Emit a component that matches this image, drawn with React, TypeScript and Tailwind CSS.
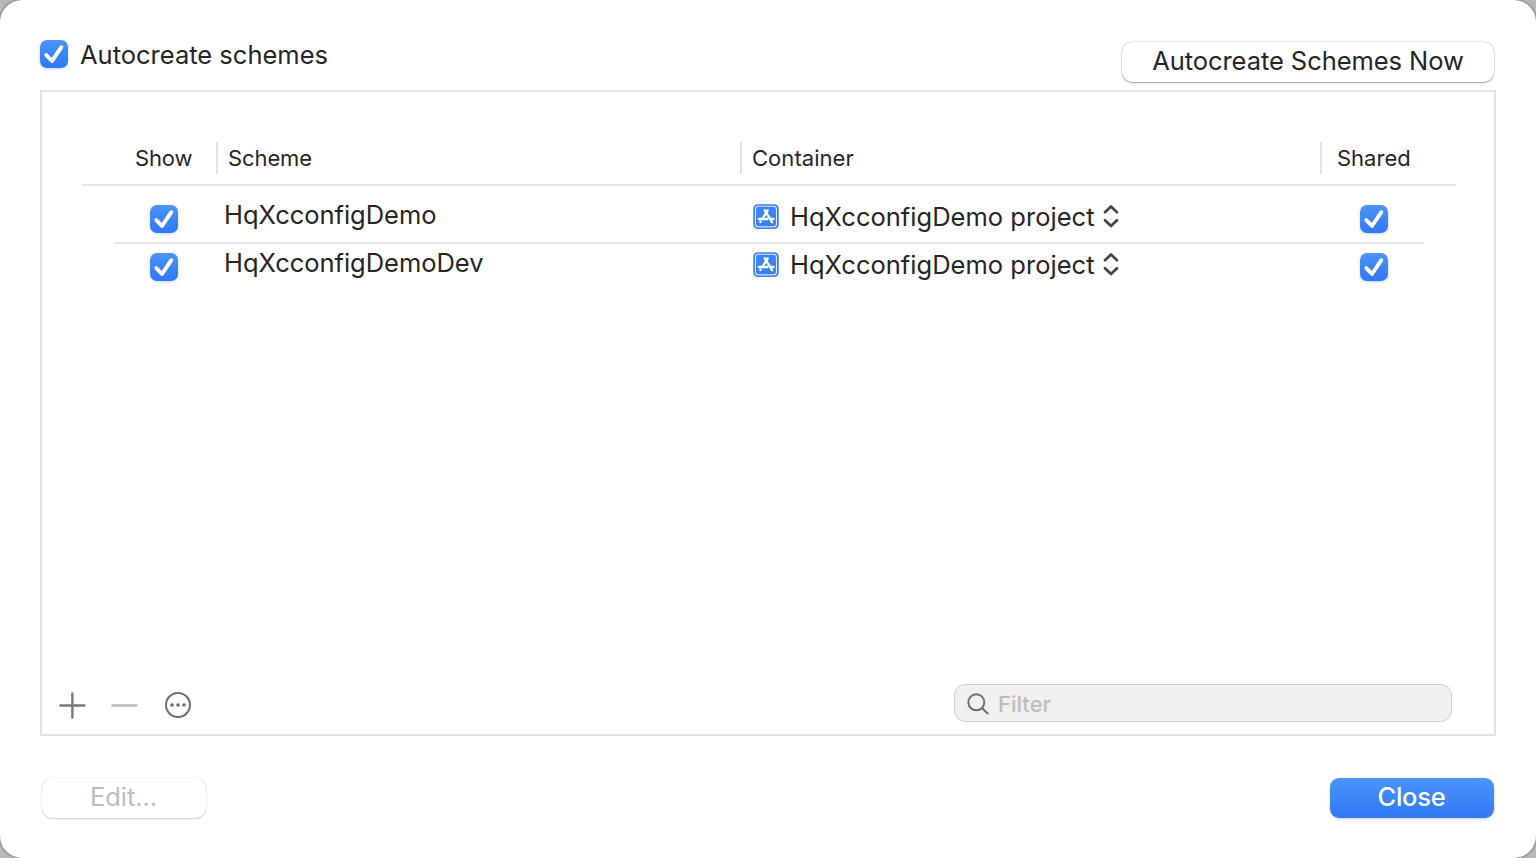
import React from "react";

const rows = [
  { name: "HqXcconfigDemo", container: "HqXcconfigDemo project" },
  { name: "HqXcconfigDemoDev", container: "HqXcconfigDemo project" },
];

function Checkbox() {
  return (
    <span
      role="checkbox"
      aria-checked="true"
      className="block size-7 shrink-0 rounded-[7px] bg-linear-to-b from-[#4a94f9] to-[#2f78f6] shadow-[0_1px_3px_rgba(47,120,246,0.3)]"
    >
      <svg viewBox="0 0 28 28" className="size-7" fill="none" stroke="#fff" strokeWidth="3.9" strokeLinecap="round" strokeLinejoin="round">
        <path d="M6.3 15.1 L12 21 L21.3 7.2" />
      </svg>
    </span>
  );
}

function ProjectIcon() {
  return (
    <svg viewBox="0 0 26 26" className="size-[26px] shrink-0" fill="none">
      <rect x="0.2" y="0.2" width="25.6" height="24.8" rx="4.6" fill="#3c82f6" />
      <rect x="2.5" y="2.3" width="21" height="20.6" rx="3" stroke="#dce9fe" strokeWidth="1.1" />
      <g stroke="#fff" strokeWidth="2.3" strokeLinecap="round">
        <path d="M11.8 6.3 L19 18.2" />
        <path d="M14.6 6.3 L9.6 14.4" />
        <path d="M7.6 17.6 L7.3 18.1" />
        <path d="M5.8 15 H14.4 M18.2 15 H20.4" />
      </g>
    </svg>
  );
}

function UpDown() {
  return (
    <svg viewBox="0 0 16 24" className="h-6 w-4 shrink-0" fill="none" stroke="#464646" strokeWidth="2.7" strokeLinecap="round" strokeLinejoin="round">
      <path d="M2 8.3 L8 2.5 L14 8.3 M2 16.2 L8 22 L14 16.2" />
    </svg>
  );
}

export default function App() {
  return (
    <div className="h-[858px] w-[1536px] overflow-hidden bg-[#b9b9b9] font-['Inter',sans-serif] font-[430] text-[#262626]">
      <main className="flex h-full flex-col rounded-[22px] bg-white px-10 shadow-[0_0_3px_rgba(0,0,0,0.6)]">
        <header className="flex h-[90px] shrink-0 justify-between">
          <label className="flex pt-10">
            <Checkbox />
            <span className="ml-3 h-7 text-[25.5px] leading-[30px] whitespace-nowrap">Autocreate schemes</span>
          </label>
          <button className="mt-[42px] mr-0.5 h-10 w-[372px] rounded-[10px] bg-white pb-0.5 text-[25.5px] leading-[36px] tracking-[-0.06px] whitespace-nowrap shadow-[0_0_1.5px_rgba(0,0,0,0.35),0_1px_1.5px_rgba(0,0,0,0.3)]">
            Autocreate Schemes Now
          </button>
        </header>

        <section className="flex h-[646px] shrink-0 flex-col border-2 border-[#e3e3e3]">
          <div className="mr-[38px] ml-10 mt-[50px] flex h-[44px] shrink-0 border-b-2 border-[#e5e5e5] text-[22px] leading-8">
            <div className="h-8 w-[136px] border-r-2 border-[#e3e3e3] pl-[53px] tracking-[-0.15px]">Show</div>
            <div className="h-8 w-[524px] border-r-2 border-[#e3e3e3] pl-2.5 tracking-[-0.1px]">Scheme</div>
            <div className="h-8 w-[580px] border-r-2 border-[#e3e3e3] pl-2.5 tracking-[0.05px]">Container</div>
            <div className="h-8 pl-[15px]">Shared</div>
          </div>
          <div className="mr-[70px] ml-[72px] pt-[10px]">
            {rows.map((row, i) => (
              <div
                key={row.name}
                className={
                  i === 0
                    ? "flex h-12 border-b-2 border-[#e5e5e5] pt-[9px] pl-9"
                    : "flex h-12 pt-[9px] pl-9"
                }
              >
                <Checkbox />
                <div className="ml-[46px] w-[528px] text-[25.5px] leading-[20px] tracking-[-0.03px] whitespace-nowrap">{row.name}</div>
                <div className="ml-[1px] flex h-[26px] w-[607px] text-[25.5px] leading-[24px] whitespace-nowrap">
                  <span className="-mt-px"><ProjectIcon /></span>
                  <span className="ml-[11px] w-[306px] tracking-[0.02px]">{row.container}</span>
                  <span className="-mt-px ml-[7px]"><UpDown /></span>
                </div>
                <Checkbox />
              </div>
            ))}
          </div>

          <div className="mt-auto flex h-[50px] shrink-0 justify-between pr-[42px] pl-[17px]">
            <div className="flex pt-[7px]">
              <svg viewBox="0 0 28 28" className="size-7" stroke="#7b7b7b" strokeWidth="2.4" strokeLinecap="round">
                <path d="M1.4 14.5 H25.4 M13.4 2.5 V26.5" />
              </svg>
              <svg viewBox="0 0 28 28" className="ml-6 size-7" stroke="#bcbcbc" strokeWidth="2.4" strokeLinecap="round">
                <path d="M1.4 14.5 H25.4" />
              </svg>
              <svg viewBox="0 0 28 28" className="ml-[25px] size-7" fill="none" stroke="#6d6d6d" strokeWidth="2">
                <circle cx="14" cy="14" r="12" />
                <g fill="#6d6d6d" stroke="none">
                  <circle cx="8" cy="14" r="1.8" />
                  <circle cx="14" cy="14" r="1.8" />
                  <circle cx="20" cy="14" r="1.8" />
                </g>
              </svg>
            </div>
            <div className="flex h-[38px] w-[498px] rounded-[11px] border border-[#d0d0d0] bg-[#f0f0f0] pl-3">
              <svg viewBox="0 0 24 24" className="mt-[7px] size-6" fill="none" stroke="#6c6c6c" strokeWidth="1.9" strokeLinecap="round">
                <circle cx="9.3" cy="10.3" r="8" />
                <path d="M15.2 16.2 L20.7 21.5" />
              </svg>
              <span className="ml-[7px] text-[22px] leading-[38px] font-[470] text-[#bdbdbd]">Filter</span>
            </div>
          </div>
        </section>

        <footer className="flex justify-between px-0.5 pt-[42px]">
          <button className="h-10 w-[164px] rounded-[10px] bg-white pr-px pb-0.5 text-[25.5px] leading-[36px] tracking-[-0.1px] text-[#bdbdbd] shadow-[0_0_1.5px_rgba(0,0,0,0.2),0_1px_1.5px_rgba(0,0,0,0.15)]">
            Edit...
          </button>
          <button className="h-10 w-[164px] rounded-[9px] bg-linear-to-b from-[#4a94f9] to-[#2f78f6] pr-px pb-0.5 text-[25.5px] leading-[36px] font-[480] tracking-[-0.2px] text-white shadow-[0_1px_3px_rgba(47,120,246,0.3)]">
            Close
          </button>
        </footer>
      </main>
    </div>
  );
}
